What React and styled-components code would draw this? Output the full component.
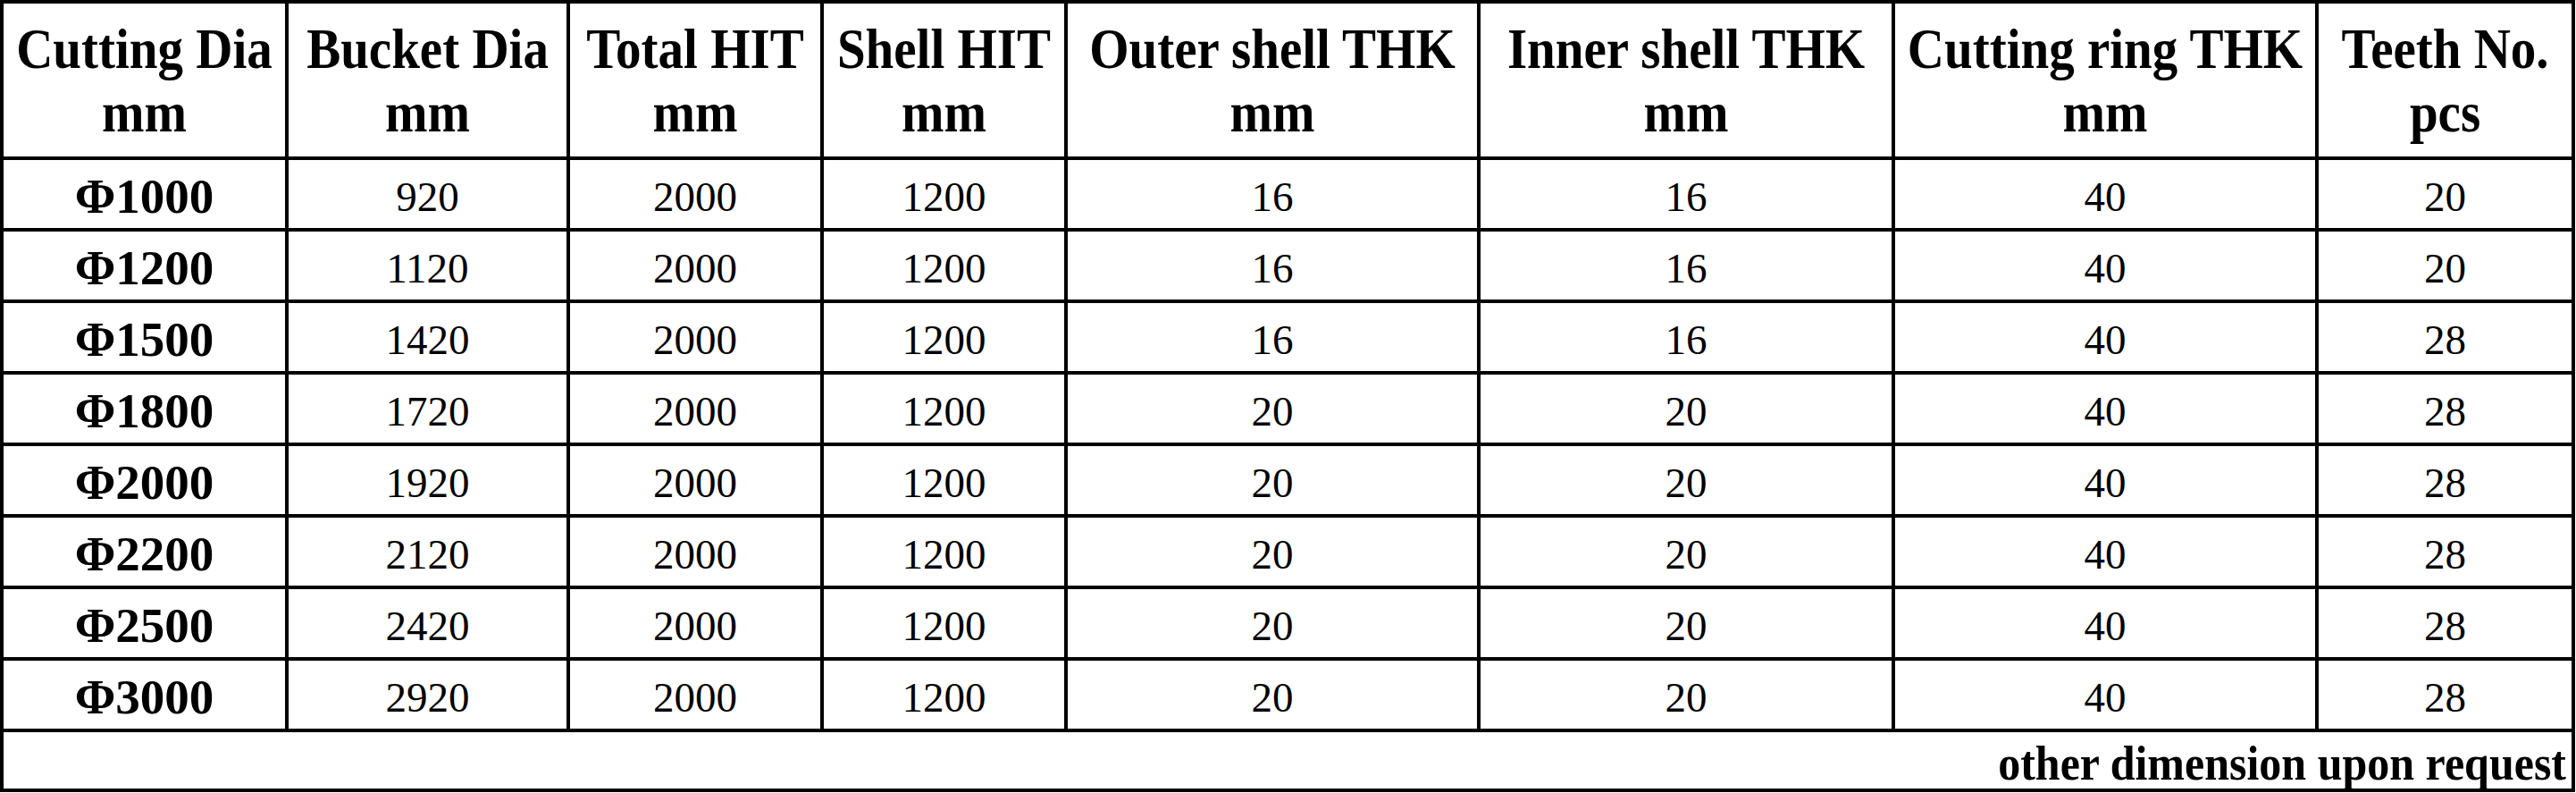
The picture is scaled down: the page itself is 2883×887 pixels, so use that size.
import React from "react";
import styled, { createGlobalStyle } from "styled-components";

const Global = createGlobalStyle`
  html, body { margin: 0; padding: 0; background: #fff; }
  body { font-family: "Liberation Serif", "Times New Roman", serif; color: #000; }
`;

const Table = styled.div`
  display: grid;
  width: 2882px;
  box-sizing: border-box;
  grid-template-columns: 315px 311px 280px 269px 458px 460px 470px 283px;
  grid-template-rows: 171px repeat(8, 76px) 63px;
  gap: 4px;
  padding: 4px;
  background: #000;
  font-family: "Liberation Serif", "Times New Roman", serif;
`;

const Cell = styled.div`
  background: #fff;
  display: flex;
  align-items: center;
  justify-content: center;
  text-align: center;
  overflow: hidden;
  white-space: nowrap;
`;

const HeadCell = styled(Cell)`
  font-weight: 700;
  font-size: 57px;
  line-height: 65px;
`;

const Stretch = styled.span`
  display: inline-block;
  transform: scaleY(1.1);
  transform-origin: center;
`;

const BodyCell = styled(Cell)`
  font-weight: ${(p) => (p.$bold ? 700 : 400)};
  font-size: ${(p) => (p.$bold ? "55px" : "47px")};
  line-height: 1;
  padding-top: ${(p) => (p.$bold ? "4px" : "6px")};
  box-sizing: border-box;
`;

const FootCell = styled(Cell)`
  grid-column: 1 / -1;
  justify-content: flex-end;
  padding-right: 6px;
  padding-top: 4px;
  box-sizing: border-box;
  font-weight: 700;
  font-size: 50px;
  line-height: 1;
`;

const headers = [
  ["Cutting Dia", "mm"],
  ["Bucket Dia", "mm"],
  ["Total HIT", "mm"],
  ["Shell HIT", "mm"],
  ["Outer shell THK", "mm"],
  ["Inner shell THK", "mm"],
  ["Cutting ring THK", "mm"],
  ["Teeth No.", "pcs"],
];

const rows = [
  ["Φ1000", "920", "2000", "1200", "16", "16", "40", "20"],
  ["Φ1200", "1120", "2000", "1200", "16", "16", "40", "20"],
  ["Φ1500", "1420", "2000", "1200", "16", "16", "40", "28"],
  ["Φ1800", "1720", "2000", "1200", "20", "20", "40", "28"],
  ["Φ2000", "1920", "2000", "1200", "20", "20", "40", "28"],
  ["Φ2200", "2120", "2000", "1200", "20", "20", "40", "28"],
  ["Φ2500", "2420", "2000", "1200", "20", "20", "40", "28"],
  ["Φ3000", "2920", "2000", "1200", "20", "20", "40", "28"],
];

export default function App() {
  return (
    <>
      <Global />
      <Table>
        {headers.map(([a, b]) => (
          <HeadCell key={a}>
            <Stretch>
              {a}
              <br />
              {b}
            </Stretch>
          </HeadCell>
        ))}
        {rows.map((r) =>
          r.map((v, i) => (
            <BodyCell key={r[0] + i} $bold={i === 0}>
              {v}
            </BodyCell>
          ))
        )}
        <FootCell>
          <Stretch>other dimension upon request</Stretch>
        </FootCell>
      </Table>
    </>
  );
}
